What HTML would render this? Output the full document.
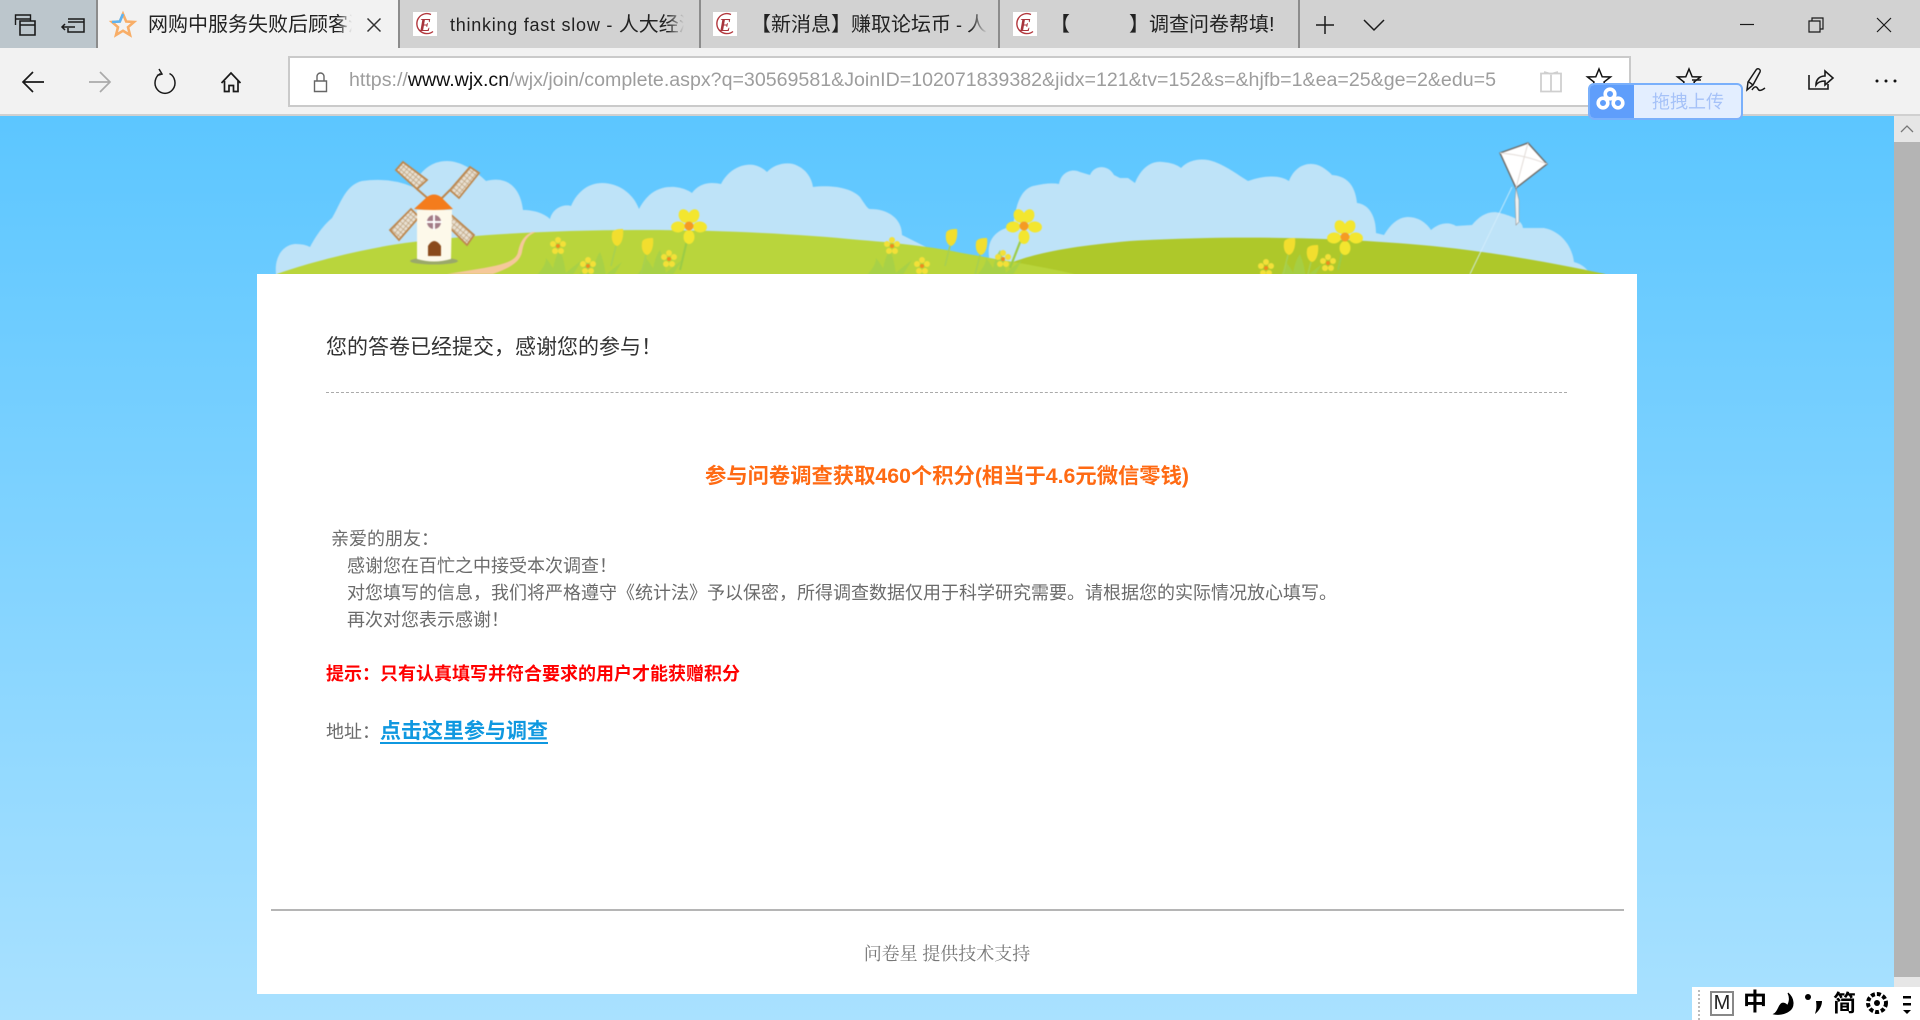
<!DOCTYPE html>
<html lang="zh-CN"><head><meta charset="utf-8"><title>问卷星</title>
<style>
*{box-sizing:border-box}
html,body{margin:0;padding:0;width:1920px;height:1020px;overflow:hidden;background:#fff}
body{position:relative;font-family:"Liberation Sans","Noto Sans CJK SC",sans-serif}
.a{position:absolute;white-space:nowrap}
.t{font-size:20px;line-height:26px;color:#222}
.fade{overflow:hidden;-webkit-mask-image:linear-gradient(90deg,#000 93%,transparent);mask-image:linear-gradient(90deg,#000 93%,transparent)}
.tabsep{position:absolute;top:0;width:2px;height:48px;background:#8c8c8c}
.e{position:absolute;top:12px;width:24px;height:24px;background:#fff}
.c{font-size:18px;line-height:28px;color:#6b6b6b}
</style></head><body>
<!-- page background -->
<div class="a" style="left:0;top:116px;width:1894px;height:904px;background:linear-gradient(#5cc6ff,#a9e1ff)"></div>
<!-- chrome -->
<div class="a" style="left:0;top:0;width:1920px;height:48px;background:#d2d2d2"></div>
<div class="a" style="left:0;top:0;width:97px;height:48px;background:#bcc6cc"></div>
<div class="a" style="left:97px;top:0;width:302px;height:48px;background:#f2f2f2"></div>
<div class="a" style="left:0;top:48px;width:1920px;height:67px;background:#f2f2f2"></div>
<div class="a" style="left:0;top:114px;width:1920px;height:2px;background:#d0d0d0"></div>
<div class="tabsep" style="left:96px"></div><div class="tabsep" style="left:398px"></div><div class="tabsep" style="left:699px"></div><div class="tabsep" style="left:998px"></div><div class="tabsep" style="left:1298px"></div>
<div class="a" style="left:288px;top:56px;width:1343px;height:51px;background:#fff;border:2px solid #cacaca"></div>

<div class="a t fade" style="left:148px;top:12px;width:204px">网购中服务失败后顾客满意度研究</div>
<div class="a t fade" style="left:450px;top:12px;width:234px"><span style="font-size:18px;letter-spacing:.75px">thinking fast slow - </span>人大经济论坛</div>
<div class="a t fade" style="left:751px;top:12px;width:236px"><span>【新消息】赚取论坛币</span><span style="font-size:18px"> - </span>人大经济</div>
<div class="a t" style="left:1050px;top:12px;width:230px">【<span style="display:inline-block;width:59px"></span>】调查问卷帮填!</div>

<div class="e" style="left:413px"></div><div class="e" style="left:713px"></div><div class="e" style="left:1013px"></div>

<svg class="a" style="left:0;top:0" width="1920" height="120" viewBox="0 0 1920 120" fill="none" stroke="#1a1a1a" stroke-width="1.4">
 <!-- left tool icons -->
 <path d="M15.5 25V15h15v6M15.5 19h15" /><path d="M20 21h15v14H20zM20 25h15" stroke-width="1.6"/>
 <path d="M68 19h16v13H68v-4M68 22h16M62 27h13M65 24l-3 3 3 3" stroke-width="1.5"/>
 <!-- active star -->
 <polygon points="123,14 126.2,21.5 134,22 128,27.2 130,35 123,30.8 116,35 118,27.2 112,22 119.8,21.5" stroke="#f8ae68" stroke-width="2.6"/>
 <path d="M123 14l-3.2 7.500-7.800.5" stroke="#5fb4f2" stroke-width="2.6"/>
 <!-- close -->
 <path d="M367.500 18.500l13 13M380.500 18.500l-13 13" stroke="#333" stroke-width="1.5"/>
 <!-- E icons -->
 <g id="e1"><path d="M431 14.500a10 10 0 1 0 2 17" stroke="#b3393f" stroke-width="1.400"/></g>
 <use href="#e1" x="300"/><use href="#e1" x="600"/>
 <!-- plus chevron -->
 <path d="M1325 16v18M1316 25h18" stroke-width="1.500"/>
 <path d="M1364 20l10 10 10-10" stroke-width="1.500"/>
 <!-- window -->
 <path d="M1740 24.500h14" stroke-width="1.200"/>
 <path d="M1809 21h11v11h-11zM1812 21v-3h11v11h-3" stroke-width="1.200"/>
 <path d="M1877 18l14 14M1891 18l-14 14" stroke-width="1.200"/>
 <!-- nav -->
 <path d="M23 82h21M33 72L23 82l10 10" stroke-width="1.700"/>
 <path d="M89 82h21M100 72l10 10-10 10" stroke="#aaa" stroke-width="1.700"/>
 <path d="M160.500 73.500a10 10.500 0 1 0 9 0M159 69l3 5-5 1.500" stroke-width="1.500"/>
 <path d="M221.500 83l9.500-10 9.500 10M224.500 81v10.500h4.500v-6h4.500v6h4.500V81" stroke-width="1.700"/>
 <!-- lock -->
 <path d="M314.500 81h12v10.500h-12zM317 81v-4.500a3.500 3.500 0 0 1 7 0V81" stroke="#666" stroke-width="1.400"/>
 <!-- reading -->
 <path d="M1541 73.500h20v18h-20zM1551 75v16M1544 72l7 2 7-2" stroke="#cfcfcf" stroke-width="1.800"/>
 <!-- stars -->
 <polygon points="1599,69 1602.200,76.800 1610.500,77 1604,82 1606.500,90 1599,85.500 1591.500,90 1594,82 1587.500,77 1595.800,76.800" stroke="#111" stroke-width="1.500"/>
 <polygon points="1689,69 1692.200,76.800 1700.500,77 1694,82 1696.500,90 1689,85.500 1681.500,90 1684,82 1677.500,77 1685.800,76.800" stroke="#111" stroke-width="1.500"/>
 <path d="M1692 80h9M1695 85h6" stroke-width="1.500"/>
 <!-- pen -->
 <path d="M1747 90l1-8 8-12a2 2 0 0 1 4 2l-7 13-6 5zM1749 82l4 3M1752 90c3-5 5-3 6-1s3 2 7-1" stroke-width="1.500"/>
 <!-- share -->
 <path d="M1809 75v14h19v-5M1816 85c0-6 4-9 9-9v-5l8 7-8 7v-4c-4 0-7 1-9 4z" stroke-width="1.600"/>
 <!-- dots -->
 <g fill="#111" stroke="none"><circle cx="1877" cy="81" r="1.500"/><circle cx="1886" cy="81" r="1.500"/><circle cx="1895" cy="81" r="1.500"/></g>
 <!-- url -->
 <text x="349" y="86" textLength="1147" lengthAdjust="spacingAndGlyphs" font-family="Liberation Sans,Noto Sans CJK SC,sans-serif" font-size="19" fill="#9d9d9d" stroke="none">https://<tspan fill="#111">www.wjx.cn</tspan>/wjx/join/complete.aspx?q=30569581&amp;JoinID=102071839382&amp;jidx=121&amp;tv=152&amp;s=&amp;hjfb=1&amp;ea=25&amp;ge=2&amp;edu=5</text>
 <g font-family="Liberation Serif,serif" font-style="italic" font-weight="700" font-size="18" fill="#a8333b" stroke="none"><text x="419" y="31">E</text><text x="719" y="31">E</text><text x="1019" y="31">E</text></g>
</svg>

<!-- scene -->
<svg class="a" style="left:0;top:116px;filter:blur(.6px)" width="1894" height="170" viewBox="0 116 1894 170">
 <defs>
  <pattern id="lat" width="4" height="4" patternUnits="userSpaceOnUse" patternTransform="rotate(40)"><rect width="4" height="4" fill="#e8e0d2"/><path d="M0 0H4M0 0V4" stroke="#b99a72" stroke-width="1.200"/></pattern>
  <g id="fl"><g fill="#f3e62f"><ellipse cx="0" cy="-11" rx="5.500" ry="7" transform="rotate(-25)"/><ellipse cx="0" cy="-11" rx="5.500" ry="7" transform="rotate(25)"/><ellipse cx="0" cy="-11" rx="5.500" ry="7" transform="rotate(95)"/><ellipse cx="0" cy="-11" rx="5.500" ry="7" transform="rotate(180)"/><ellipse cx="0" cy="-11" rx="5.500" ry="7" transform="rotate(265)"/></g><circle r="4.500" fill="#f59a23"/></g>
  <g id="sm"><g fill="#f3e038"><circle cy="-6" r="3"/><circle cx="5" cy="-2" r="3"/><circle cx="3" cy="5" r="3"/><circle cx="-3" cy="5" r="3"/><circle cx="-5" cy="-2" r="3"/></g><circle r="2" fill="#f08a1e"/></g>
  <g id="tu"><path d="M-5 -4C-5 -9 3 -9 6 -9C7 -2 5 7 0 8C-4 7 -6 1 -5 -4Z" fill="#f2de2e"/><path d="M-1 8L-6 28" stroke="#a8d050" stroke-width="1.600" fill="none"/></g>
  <g id="gr" fill="#a4d04a" opacity=".8"><path d="M-24 0Q-14 -10 -14 -18Q-6 -8 -4 0ZM-8 0Q-6 -18 0 -26Q5 -14 6 0ZM2 0Q14 -10 22 -16Q16 -6 12 0Z"/></g>
 </defs>
 <g fill="#bee3f8">
  <path d="M276 274C274 256 284 244 296 244Q305 244 310 247C318 232 325 224 332 218C340 205 345 185 362 181Q390 177 413 187C420 170 432 161 447 161C460 161 475 170 486 181C505 176 520 185 523 210C535 210 545 214 550 219C553 207 565 204 571 206C578 190 590 183 602 183C620 183 634 195 639 209C648 192 660 186 675 187Q685 188 692 193C700 182 712 182 721 184C728 170 742 163 754 165Q762 167 767 172C775 163 790 161 798 166C808 171 812 180 813 187C830 185 850 187 860 197C866 206 868 209 870 209C890 209 902 220 902 235L926 247V280H276Z"/>
  <path d="M990 262C985 240 995 230 1013 226C1016 205 1020 190 1033 186Q1050 182 1059 184C1061 172 1072 168 1080 172L1090 175C1094 165 1108 164 1114 175L1120 178H1128L1135 183C1140 170 1150 160 1163 162Q1175 163 1181 168C1190 158 1205 158 1215 162C1228 167 1238 175 1248 181C1265 175 1280 175 1289 181C1295 165 1310 160 1322 167C1330 172 1332 175 1332 175C1345 176 1355 183 1357 203C1368 204 1376 215 1376 233L1384 235C1390 225 1398 217 1408 217C1420 217 1428 225 1431 230C1440 222 1450 222 1456 226L1472 225C1480 215 1490 210 1500 213C1512 216 1522 220 1523 228L1544 228C1560 231 1572 245 1574 262Q1585 265 1590 274V280H990Z"/>
 </g>
 <path d="M1013 262C1040 252 1074 246 1130 241C1217 236 1319 236 1421 245C1480 250 1550 262 1605 274V280H1000Z" fill="#aec82a"/>
 <path d="M277 274C310 262 370 247 413 242C480 234 560 230 643 230C720 230 800 234 860 240C900 243 940 248 962 253C1000 260 1040 266 1074 274V280H277Z" fill="#b9d53c"/>
 <path d="M532 232C523 236 520 243 518 252C516 262 500 265 484 268L447 274H493C510 268 520 262 522 252C524 242 526 236 536 232Z" fill="#f5c89a"/>
 <!-- grass -->
 <use href="#gr" x="560" y="276"/><use href="#gr" x="660" y="276"/><use href="#gr" x="890" y="276"/><use href="#gr" x="1000" y="276"/><use href="#gr" x="600" y="278"/><use href="#gr" x="1300" y="280"/>
 <!-- flowers -->
 <path d="M689 232L680 270M1024 232L1010 268M1345 240L1338 270" stroke="#9ccc46" stroke-width="2.200"/>
 <use href="#fl" x="689" y="226"/><use href="#fl" x="1024" y="226"/><use href="#fl" x="1345" y="237"/>
 <use href="#sm" x="558" y="246"/><use href="#sm" x="588" y="266"/><use href="#sm" x="669" y="259"/><use href="#sm" x="892" y="246"/><use href="#sm" x="922" y="266"/><use href="#sm" x="1003" y="259"/><use href="#sm" x="1266" y="268"/><use href="#sm" x="1328" y="263"/>
 <use href="#tu" x="617" y="238"/><use href="#tu" x="647" y="247"/><use href="#tu" x="951" y="238"/><use href="#tu" x="981" y="247"/><use href="#tu" x="1289" y="247"/><use href="#tu" x="1312" y="254"/>
 <!-- windmill -->
 <ellipse cx="434" cy="261" rx="24" ry="3.500" fill="#9aa86a"/>
 <g fill="url(#lat)" stroke="#bd874e" stroke-width="1.800">
  <path d="M396 170L403 162L427 180L417 189Z"/>
  <path d="M470 167L479 173L459 198L450 190Z"/>
  <path d="M411 209L419 217L399 240L390 230Z"/>
  <path d="M449 213L474 235L467 245L449 227Z"/>
 </g>
 <path d="M417 189L432 202M450 190L438 202" stroke="#bd874e" stroke-width="2"/>
 <path d="M417 210H452L451 259Q434 264 417 259Z" fill="#fdf9ea"/>
 <path d="M414 209L427 197Q434 192 441 197L453 209Q434 211 414 209Z" fill="#f47c1c"/>
 <circle cx="434" cy="222" r="7" fill="#a37d88"/><path d="M434 214v16M426 222h16" stroke="#fff" stroke-width="2"/>
 <path d="M428 256V246Q434 236 441 246V256Z" fill="#8a4a1c"/>
 <!-- kite -->
 <path d="M1512 187L1470 274" stroke="#d7effc" stroke-width="1" opacity=".8"/>
 <path d="M1516 188L1519 200V222L1516 225L1515 200Z" fill="#eef0f0" stroke="#999" stroke-width=".6"/>
 <path d="M1500 153L1528 143L1547 164L1516 188Z" fill="#fff" stroke="#6f6a66" stroke-width="1.400"/>
 <path d="M1528 143L1516 188M1500 153Q1525 155 1547 164" stroke="#e3dcd8" stroke-width="1" fill="none"/>
</svg>

<!-- baidu widget -->
<div class="a" style="left:1588px;top:83px;width:155px;height:37px;border:2px solid #7ab0fb;border-radius:6px;background:#e3eeff;overflow:hidden">
 <div class="a" style="left:-2px;top:-2px;width:46px;height:37px;background:#5f9efb"></div>
 <svg class="a" style="left:4px;top:1px" width="32" height="28" viewBox="0 0 32 28" fill="none" stroke="#fff" stroke-width="3.600"><circle cx="16" cy="8" r="4.800"/><circle cx="9" cy="17" r="4.800"/><circle cx="24" cy="17" r="4.800"/></svg>
 <div class="a" style="left:62px;top:4px;font-size:18px;line-height:26px;color:#a6c2f8">拖拽上传</div>
</div>

<!-- card -->
<div class="a" style="left:257px;top:274px;width:1380px;height:720px;background:#fff"></div>
<div class="a" style="left:326px;top:334px;font-size:21px;line-height:28px;color:#333">您的答卷已经提交，感谢您的参与！</div>
<div class="a" style="left:326px;top:392px;width:1241px;height:0;border-top:1px dashed #aaa"></div>
<div class="a" style="left:257px;top:461px;width:1380px;text-align:center;font-size:21.3px;line-height:30px;font-weight:700;color:#ff6a13">参与问卷调查获取460个积分(相当于4.6元微信零钱)</div>
<div class="a c" style="left:331px;top:525px">亲爱的朋友：</div>
<div class="a c" style="left:347px;top:552px">感谢您在百忙之中接受本次调查！</div>
<div class="a c" style="left:347px;top:579px">对您填写的信息，我们将严格遵守《统计法》予以保密，所得调查数据仅用于科学研究需要。请根据您的实际情况放心填写。</div>
<div class="a c" style="left:347px;top:606px">再次对您表示感谢！</div>
<div class="a" style="left:326px;top:660px;font-size:18px;line-height:28px;font-weight:700;color:#f00">提示：只有认真填写并符合要求的用户才能获赠积分</div>
<div class="a c" style="left:326px;top:718px">地址：</div>
<div class="a" style="left:380px;top:717px;font-size:21px;line-height:30px;font-weight:700;color:#0f98e0;border-bottom:2px solid #0f98e0;height:27px">点击这里参与调查</div>
<div class="a" style="left:271px;top:909px;width:1353px;height:2px;background:#b5b5b5"></div>
<div class="a" style="left:257px;top:939px;width:1380px;text-align:center;font-family:'Noto Serif CJK SC','Liberation Serif',serif;font-size:18px;line-height:28px;color:#777">问卷星 提供技术支持</div>

<!-- scrollbar -->
<div class="a" style="left:1894px;top:116px;width:26px;height:904px;background:#e6e6e6"></div>
<div class="a" style="left:1894px;top:142px;width:26px;height:835px;background:#b4b4b4"></div>
<svg class="a" style="left:1894px;top:116px" width="26" height="26" fill="none" stroke="#777" stroke-width="1.300"><path d="M7 16l6-6 6 6"/></svg>

<!-- IME bar -->
<div class="a" style="left:1692px;top:987px;width:228px;height:33px;background:#fff"></div>
<div class="a" style="left:1698px;top:990px;height:30px;border-left:2px dotted #bbb"></div>
<div class="a" style="left:1710px;top:991px;width:24px;height:25px;border:2px solid #888;font-size:20px;line-height:21px;text-align:center;color:#222">M</div>
<div class="a" style="left:1743px;top:988px;font-size:24px;line-height:30px;font-weight:700;color:#000">中</div>
<div class="a" style="left:1833px;top:988px;font-size:23px;line-height:30px;font-weight:700;color:#000">简</div>
<svg class="a" style="left:1770px;top:990px" width="150" height="28" fill="#000">
 <path d="M18 3C24 8 25 17 19 21C15 24 8 25 4 24C8 22 8 17 11 14C13 12 17 14 17 16C20 12 20 7 18 3Z" stroke="#000"/>
 <circle cx="38" cy="7" r="3"/><path d="M46 11h6c0 5-3 10-7 13 1-4 2-6 1-13z"/>
 <circle cx="107" cy="13" r="9" fill="none" stroke="#000" stroke-width="4" stroke-dasharray="4 2"/><circle cx="107" cy="13" r="3"/>
 <rect x="133" y="6" width="8" height="2.500"/><rect x="133" y="13" width="8" height="2.500"/><path d="M133 20h8l-4 4z"/>
</svg>
</body></html>
